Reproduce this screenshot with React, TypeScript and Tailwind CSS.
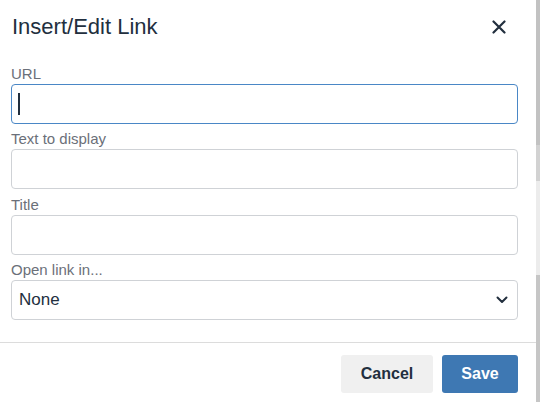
import React from 'react';

const fields = ['Text to display', 'Title'];

const Label: React.FC<{ children: React.ReactNode }> = ({ children }) => (
  <div className="h-[21px] text-[15px] leading-[21px] text-[#6b7079]">{children}</div>
);

const App: React.FC = () => {
  return (
    <div className="flex w-[540px] h-[402px] bg-white font-['Liberation_Sans',Arial,sans-serif] overflow-hidden">
      <div className="flex flex-col w-[536px]">
        {/* Header */}
        <div className="flex items-center justify-between h-[54px] pl-[12px] pr-[30px]">
          <h1 className="text-[22px] text-[#222f3e] leading-[28px] -mt-[1px]">Insert/Edit Link</h1>
          <svg width="14" height="14" viewBox="0 0 14 14">
            <path d="M1.5 1.5 L12.5 12.5 M12.5 1.5 L1.5 12.5" stroke="#222f3e" strokeWidth="2.2" strokeLinecap="round" />
          </svg>
        </div>

        {/* Body */}
        <div className="flex flex-col gap-[4.4px] pl-[11px] pr-[18px] pt-[9px] pb-[22px]">
          <div>
            <Label>URL</Label>
            <div className="h-[40px] rounded-[4px] border border-[#4a87c6] flex items-center px-[6px]">
              <span className="w-[2px] h-[22px] bg-[#222f3e]" />
            </div>
          </div>
          {fields.map((f) => (
            <div key={f}>
              <Label>{f}</Label>
              <div className="h-[40px] rounded-[4px] border border-[#cfd2d6]" />
            </div>
          ))}
          <div>
            <Label>Open link in...</Label>
            <div className="h-[40px] rounded-[4px] border border-[#cfd2d6] flex items-center justify-between pl-[7px] pr-[9px]">
              <span className="text-[17px] text-[#222f3e]">None</span>
              <svg width="12" height="8" viewBox="0 0 12 8">
                <path d="M1.5 1.5 L6 6 L10.5 1.5" fill="none" stroke="#222f3e" strokeWidth="2" strokeLinecap="round" strokeLinejoin="round" />
              </svg>
            </div>
          </div>
        </div>

        {/* Footer */}
        <div className="flex justify-end gap-[9px] border-t border-[#dcdcdc] pt-[12px] pr-[18px]">
          <button className="w-[92px] h-[38px] rounded-[3px] bg-[#f0f0f0] text-[16px] font-bold text-[#222f3e]">
            Cancel
          </button>
          <button className="w-[76px] h-[38px] rounded-[3px] bg-[#3e78b3] text-[16px] font-bold text-white">
            Save
          </button>
        </div>
      </div>

      {/* Backdrop strip */}
      <div className="flex flex-col w-[4px]">
        <div className="h-[145px] bg-[#c2c2c2]" />
        <div className="h-[36px] bg-[#d2d2d2]" />
        <div className="h-[94px] bg-[#ececec]" />
        <div className="flex-1 bg-[#c6c6c6]" />
      </div>
    </div>
  );
};

export default App;
